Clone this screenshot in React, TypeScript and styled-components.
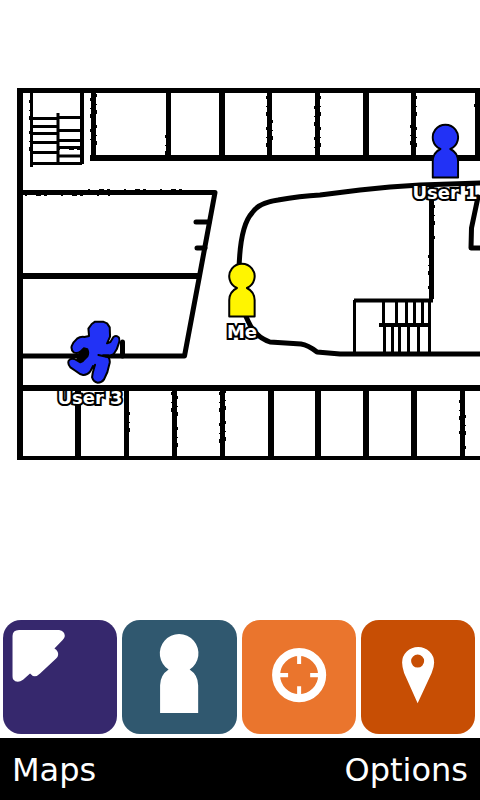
import React from "react";
import styled, { createGlobalStyle } from "styled-components";

const GlobalStyle = createGlobalStyle`
  * { box-sizing: border-box; }
  body { margin: 0; background: #fff; font-family: "DejaVu Sans", Verdana, sans-serif; }
  button { font: inherit; border: 0; padding: 0; margin: 0; cursor: pointer; }
`;

const Page = styled.div`
  min-height: 100vh;
  display: flex;
  flex-direction: column;
`;

const MapArea = styled.main`
  flex: 1;
  overflow: hidden;
`;

const MapCanvas = styled.div`
  position: relative;
  aspect-ratio: 4 / 5;
`;

const Plan = styled.svg`
  display: block;
  width: 100%;
  height: 100%;
`;

const Pin = styled.button<{ $x: number; $y: number }>`
  position: absolute;
  left: ${(p) => (p.$x / 480) * 100}%;
  top: ${(p) => (p.$y / 600) * 100}%;
  transform: translateX(-50%);
  display: flex;
  flex-direction: column;
  align-items: center;
  background: none;
`;

const Figure = styled.svg<{ $w: number; $h: number }>`
  display: block;
  width: ${(p) => p.$w}px;
  height: ${(p) => p.$h}px;
  stroke: #000;
  stroke-linejoin: round;
  stroke-linecap: round;
`;

const PinLabel = styled.span`
  margin-top: 4px;
  font-size: 18px;
  line-height: 20px;
  font-weight: 700;
  white-space: nowrap;
  color: #fff;
  -webkit-text-stroke: 4px #000;
  paint-order: stroke fill;
`;

const Toolbar = styled.nav`
  display: grid;
  grid-template-columns: repeat(4, 1fr);
  gap: 5px;
  padding: 0 5px 4px 3px;
`;

const Tile = styled.button<{ $color: string }>`
  aspect-ratio: 1;
  border-radius: 18px;
  overflow: hidden;
  background: ${(p) => p.$color};
`;

const TileIcon = styled.svg`
  display: block;
  width: 100%;
  height: 100%;
  fill: #fff;
`;

const MenuBar = styled.footer`
  display: flex;
  justify-content: space-between;
  align-items: center;
  height: 62px;
  padding: 2px 12px 0;
  background: #000;
`;

const MenuButton = styled.button`
  background: none;
  color: #fff;
  font-size: 32px;
  line-height: 40px;
`;

const line = (x1: number, y1: number, x2: number, y2: number) => `M${x1} ${y1}L${x2} ${y2}`;

const heavyWalls = [
  line(20, 88, 20, 460),
  line(90, 158, 480, 158),
  line(20, 276, 200, 276),
  line(20, 388, 480, 388),
  ...[222, 366].map((x) => line(x, 90, x, 158)),
  ...[78, 271, 318, 366, 414].map((x) => line(x, 388, x, 458)),
].join("");

const walls = [
  line(18, 90.5, 480, 90.5),
  ...[93.5, 168.5, 269.5, 317.5, 413.5, 477.5].map((x) => line(x, 90, x, 158)),
  ...[126.5, 174.5, 222.5, 462.5].map((x) => line(x, 388, x, 458)),
  "M20 192.5H215L199.5 276L184.5 356H20",
  line(431.5, 185, 431.5, 299),
].join("");

const curves = [
  "M196 222H209M197 248H205M122.5 342V356",
  "M239 270Q240 226 252 213Q258 203 278 200Q300 196 320 195L360 190L390 187L420 185L482 183",
  "M244 312L248 321Q255 337 270 342L301 344Q308 345 317 352L340 354H482",
  "M478 197L471.5 228L471 248H482",
].join("");

const stairs = [
  line(31.5, 93, 31.5, 167),
  line(58, 113, 58, 165),
  ...[118.5, 126.5, 133.5, 142.5, 152.5, 163.5].map((y) => line(32, y, 58, y)),
  ...[117.5, 130.5, 140.5, 147.5, 156, 163.5].map((y) => line(58, y, 82, y)),
  line(354.5, 300, 354.5, 354),
  ...[383.5, 396.5, 406.5, 414.5, 422.5, 429.5].map((x) => line(x, 301, x, 325)),
  ...[384.5, 392.5, 399.5, 408.5, 418.5, 429.5].map((x) => line(x, 325, x, 352)),
].join("");

const roughEdges =
  "M96.5 94V150M90.5 98V140M165.5 135V155M266.5 96V154M272.5 120V140M314.5 106V150M320.5 96V150M410.5 125V150M416.5 96V150M474.5 104V112M29.5 100V158M129.5 412V440M171.5 392V420M177.5 396V450M219.5 392V452M225.5 390V450M459.5 400V440M465.5 415V450M434.5 205V240M428.5 255V296";

const roughTops = "M88 189.5H190M25 195.5H110M58 149.5H80M60 129.5H80";

const FloorPlan = () => (
  <Plan viewBox="0 0 480 600" fill="none" stroke="#000" aria-label="Floor plan">
    <path d={heavyWalls} strokeWidth="6" />
    <path d={walls} strokeWidth="5" strokeLinejoin="round" />
    <path d={curves} strokeWidth="5" strokeLinecap="round" strokeLinejoin="round" />
    <path d={stairs} strokeWidth="3" />
    <path d="M18 458H480M354 300.5H433M379 325H431M82 93V164" strokeWidth="4" />
    <path d={roughEdges} strokeWidth="1" strokeDasharray="3 7 1 5 4 11" />
    <path d={roughTops} strokeWidth="1" strokeDasharray="2 9 5 3 3 14" />
  </Plan>
);

const Standing = ({ color }: { color: string }) => (
  <Figure viewBox="0 0 28 56" $w={28} $h={56} fill={color} strokeWidth="2" aria-hidden>
    <path d="M9 26A12.7 12.7 0 1 1 19 26A14 14 0 0 1 26.7 38V54.500H1.300V38A14 14 0 0 1 9 26Z" />
  </Figure>
);

const Running = ({ color }: { color: string }) => (
  <Figure viewBox="-6 12 180 192" $w={60} $h={64} fill={color} strokeWidth="6" aria-hidden>
    <path d="M54 106L68 94L80 104L72 126L56 138L44 132Z" fill="#000" />
    <path
      d="M78 38L88 24L98 17H122L134 22L142 34L143 62L134 82L144 78L153 63Q162 57 169 64Q173 71 170 80L163 100L154 114Q149 119 138 118L122 118L138 124Q143 130 142 140L135 168L125 190Q118 200 106 200Q93 198 89 184Q90 172 95 156L92 150L83 167Q74 178 62 177Q52 175 40 165L24 154Q15 144 19 134Q24 126 36 129L54 139Q62 137 66 130L75 121Q80 110 75 100L64 97L54 107Q44 114 34 109Q25 100 28 90Q32 78 44 68Q54 61 66 63L80 60Z"
    />
    <path d="M108 117L132 122M95 156L98 146" fill="none" />
  </Figure>
);

const App = () => (
  <Page>
    <GlobalStyle />
    <MapArea>
      <MapCanvas>
        <FloorPlan />
        <Pin $x={445} $y={123}>
          <Standing color="#2232f6" />
          <PinLabel>User 1</PinLabel>
        </Pin>
        <Pin $x={242} $y={262}>
          <Standing color="#fff500" />
          <PinLabel>Me</PinLabel>
        </Pin>
        <Pin $x={90} $y={320}>
          <Running color="#2232f6" />
          <PinLabel>User 3</PinLabel>
        </Pin>
      </MapCanvas>
    </MapArea>
    <Toolbar aria-label="Map tools">
      <Tile $color="#36286d" aria-label="Direction">
        <TileIcon viewBox="0 0 114 114">
          <path d="M9.500 16Q9.500 10 16 10H56Q61.500 11 61.700 16Q61.500 18 59.500 20L51.300 28.500Q55.500 31 55 35Q54.700 37 53 38.500L37 53.500Q31.500 59 27 53.500L20 59.500Q14 64 10 59Q9.500 58 9.500 56Z" />
        </TileIcon>
      </Tile>
      <Tile $color="#30586f" aria-label="People">
        <TileIcon viewBox="0 0 114 114">
          <path d="M46.500 49.500A19.300 19.300 0 1 1 67.500 49.500A19 19 0 0 1 76 65V92.700H38V65A19 19 0 0 1 46.500 49.500Z" />
        </TileIcon>
      </Tile>
      <Tile $color="#ea752d" aria-label="Locate me">
        <TileIcon viewBox="0 0 114 114">
          <g fill="none" stroke="#fff">
            <circle cx="57" cy="55" r="23" strokeWidth="8" />
            <path d="M57 35V44M57 66V75M37 55H46M68 55H77" strokeWidth="4" />
          </g>
        </TileIcon>
      </Tile>
      <Tile $color="#c74e04" aria-label="Places">
        <TileIcon viewBox="0 0 114 114">
          <path
            fillRule="evenodd"
            d="M56.500 83L43 53Q41 47 41 42.500A16 15.500 0 0 1 73 42.500Q73 47 70.500 53ZM50 41a6.500 6.500 0 1 0 13 0a6.500 6.500 0 1 0-13 0Z"
          />
        </TileIcon>
      </Tile>
    </Toolbar>
    <MenuBar>
      <MenuButton>Maps</MenuButton>
      <MenuButton>Options</MenuButton>
    </MenuBar>
  </Page>
);

export default App;
